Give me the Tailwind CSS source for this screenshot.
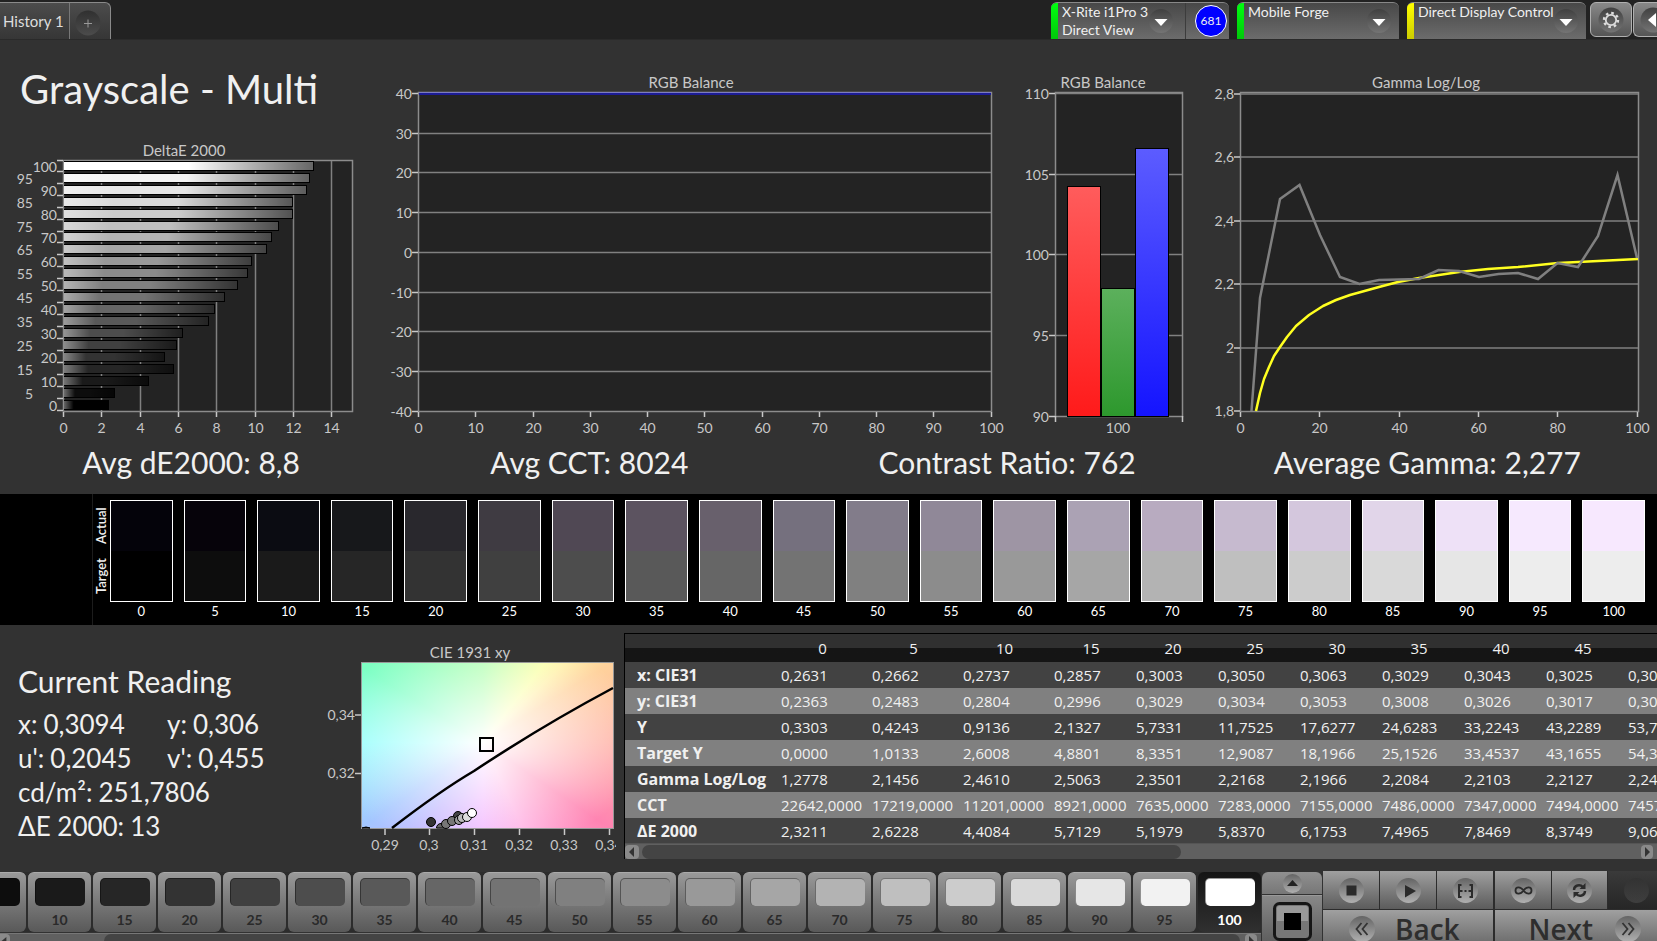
<!DOCTYPE html>
<html lang="en">
<head>
<meta charset="utf-8">
<title>Grayscale - Multi</title>
<script src="https://cdn.jsdelivr.net/npm/@tailwindcss/browser@4"></script>
</head>
<body class="h-screen overflow-hidden bg-[#323232] font-['Lato',sans-serif] text-[#f0f0f0]">
<svg class="absolute size-0" aria-hidden="true">
  <defs>
    <linearGradient id="knob" x1="0" y1="0" x2="0" y2="1"><stop offset="0" stop-color="#404040"/><stop offset="1" stop-color="#747474"/></linearGradient>
    <linearGradient id="knobDark" x1="0" y1="0" x2="0" y2="1"><stop offset="0" stop-color="#303030"/><stop offset="1" stop-color="#4c4c4c"/></linearGradient>
    <linearGradient id="knobLight" x1="0" y1="0" x2="0" y2="1"><stop offset="0" stop-color="#646464"/><stop offset="1" stop-color="#b0b0b0"/></linearGradient>
    <linearGradient id="sheen" x1="0" y1="0" x2="1" y2="0"><stop offset="0" stop-color="#fff" stop-opacity=".4"/><stop offset=".22" stop-color="#fff" stop-opacity="0"/><stop offset=".5" stop-color="#000" stop-opacity="0"/><stop offset="1" stop-color="#000" stop-opacity=".6"/></linearGradient>
    <linearGradient id="red" x1="0" y1="0" x2="0" y2="1"><stop offset="0" stop-color="#ff5c5c"/><stop offset="1" stop-color="#ff1a1a"/></linearGradient>
    <linearGradient id="green" x1="0" y1="0" x2="0" y2="1"><stop offset="0" stop-color="#5cb05c"/><stop offset="1" stop-color="#2d982d"/></linearGradient>
    <linearGradient id="blue" x1="0" y1="0" x2="0" y2="1"><stop offset="0" stop-color="#5c5cff"/><stop offset="1" stop-color="#1414ff"/></linearGradient>
  </defs>
</svg>

<header class="flex h-10 items-start justify-between border-b border-[#2a2a2a] bg-[#222222] pt-[2px]">
  <nav class="flex h-[37px] w-[111px] rounded-tr-md border-t border-r border-[#8a8a8a] bg-linear-to-b from-[#4c4c4c] to-[#363636]">
    <button class="w-[70px] border-r border-[#777777] pl-[3px] text-left text-[15px] whitespace-nowrap text-[#dddddd]">History 1</button>
    <button class="flex flex-1 items-center justify-center" aria-label="Add history">
      <svg class="mt-1 mr-1 size-[26px]" viewBox="0 0 26 26"><circle cx="13" cy="13" r="12.5" fill="url(#knobDark)"/><path d="M9 13.500h8M13 9.500v8" stroke="#999" fill="none"/></svg>
    </button>
  </nav>
  <div class="flex">
    <div class="mr-2 flex h-[37px] w-[178px] overflow-hidden rounded-t-md border-t border-[#888888] bg-linear-to-b from-[#484848] to-[#6c6c6c]">
      <span class="w-[7px] bg-linear-to-b from-[#00ff10] to-[#00c80a]"></span>
      <label class="relative w-[127px] pl-1 text-sm leading-[19px]">
        <select class="block h-[17px] w-[118px] appearance-none bg-transparent leading-[17px]" aria-label="Meter"><option>X-Rite i1Pro 3</option></select>
        Direct View
        <svg class="pointer-events-none absolute top-[6px] right-3 size-6" viewBox="0 0 24 24"><circle cx="12" cy="12" r="12" fill="url(#knob)"/><path d="M5.500 10h13l-6.500 7z" fill="#fff"/></svg>
      </label>
      <span class="flex flex-1 items-center justify-end border-l border-[#3c3c3c] pr-[2px]"><span class="flex size-8 items-center justify-center rounded-full border border-white bg-[#0000ff] text-xs">681</span></span>
    </div>
    <label class="relative mr-2 flex h-[37px] w-[162px] overflow-hidden rounded-t-md border-t border-[#888888] bg-linear-to-b from-[#484848] to-[#6c6c6c]">
      <span class="w-[7px] bg-linear-to-b from-[#00ff10] to-[#00c80a]"></span>
      <select class="h-[17px] flex-1 appearance-none bg-transparent pl-1 text-sm leading-[17px]" aria-label="Pattern source"><option>Mobile Forge</option></select>
      <svg class="pointer-events-none absolute top-[6px] right-2 size-6" viewBox="0 0 24 24"><circle cx="12" cy="12" r="12" fill="url(#knob)"/><path d="M5.500 10h13l-6.500 7z" fill="#fff"/></svg>
    </label>
    <label class="relative mr-1 flex h-[37px] w-[179px] overflow-hidden rounded-t-md border-t border-[#888888] bg-linear-to-b from-[#484848] to-[#6c6c6c]">
      <span class="w-[7px] bg-linear-to-b from-[#ffff00] to-[#cccc00]"></span>
      <select class="h-[17px] flex-1 appearance-none bg-transparent pl-1 text-sm leading-[17px]" aria-label="Display control"><option>Direct Display Control</option></select>
      <svg class="pointer-events-none absolute top-[6px] right-2 size-6" viewBox="0 0 24 24"><circle cx="12" cy="12" r="12" fill="url(#knob)"/><path d="M5.500 10h13l-6.500 7z" fill="#fff"/></svg>
    </label>
    <button class="flex h-[35px] w-[42px] items-center justify-center rounded-md border border-[#b0b0b0] bg-linear-to-b from-[#888888] to-[#555555]" aria-label="Settings">
      <svg class="size-[26px]" viewBox="0 0 26 26"><circle cx="13" cy="13" r="12.500" fill="url(#knob)"/><circle cx="13" cy="13" r="5.200" fill="none" stroke="#ddd" stroke-width="1.800"/><circle cx="13" cy="13" r="7" fill="none" stroke="#ddd" stroke-width="2.400" stroke-dasharray="2.600 2.898"/></svg>
    </button>
    <button class="ml-px flex h-[35px] w-6 items-center overflow-hidden rounded-l-md border border-r-0 border-[#b0b0b0] bg-linear-to-b from-[#888888] to-[#555555] pl-[6px]" aria-label="Collapse">
      <svg class="size-[26px] shrink-0" viewBox="0 0 26 26"><circle cx="13" cy="13" r="12.500" fill="url(#knob)"/><path d="M8 13l8-7v14z" fill="#fff"/></svg>
    </button>
  </div>
</header>

<main>
  <section class="grid grid-cols-[370fr_640fr_200fr_447fr]">
    <div>
      <h1 class="h-[100px] pt-[22px] pl-5 text-[40px] leading-[54px]">Grayscale - Multi</h1>
      <svg id="deltaE" class="block h-auto w-full" viewBox="0 140 370 300" font-size="14" fill="#c8c8c8"></svg>
    </div>
    <svg id="rgbLine" class="block h-auto w-full" viewBox="370 40 640 400" font-size="14" fill="#c8c8c8"></svg>
    <svg id="rgbBars" class="block h-auto w-full" viewBox="1010 40 200 400" font-size="14" fill="#c8c8c8"></svg>
    <svg id="gamma" class="block h-auto w-full" viewBox="1210 40 447 400" font-size="14" fill="#c8c8c8"></svg>
  </section>
  <section class="grid h-[54px] grid-cols-[382fr_414fr_421fr_419fr] pt-[2px] pr-5 text-center text-[30px] leading-[40px]">
    <p>Avg dE2000: 8,8</p><p>Avg CCT: 8024</p><p>Contrast Ratio: 762</p><p>Average Gamma: 2,277</p>
  </section>

  <section class="flex h-[131px] bg-black pt-[6px] pr-3 pl-[92px]">
    <div class="-mt-[6px] flex w-[18px] shrink-0 flex-col items-start border-l border-[#1c1c1c] pt-[6px] text-[13px] leading-4 font-semibold">
      <span class="flex h-[51px] rotate-180 items-center justify-center [writing-mode:vertical-rl]">Actual</span>
      <span class="flex h-[51px] rotate-180 items-center justify-center [writing-mode:vertical-rl]">Target</span>
    </div>
    <div id="swatches" class="grid flex-1 grid-cols-[repeat(21,minmax(0,1fr))] gap-[11px]"></div>
  </section>

  <section class="flex h-[246px]">
    <div class="w-[325px] shrink-0 pt-9 pl-[18px] text-[26px] leading-[34px]">
      <h2 class="mb-[6px] text-[30px] leading-[40px]">Current Reading</h2>
      <dl class="grid grid-cols-[149px_1fr]">
        <div class="flex gap-[6px]"><dt>x:</dt><dd>0,3094</dd></div><div class="flex gap-[6px]"><dt>y:</dt><dd>0,306</dd></div>
        <div class="flex gap-[6px]"><dt>u':</dt><dd>0,2045</dd></div><div class="flex gap-[6px]"><dt>v':</dt><dd>0,455</dd></div>
        <div class="col-span-2 flex gap-[6px]"><dt>cd/m²:</dt><dd>251,7806</dd></div>
        <div class="col-span-2 flex gap-[6px]"><dt>ΔE 2000:</dt><dd>13</dd></div>
      </dl>
    </div>
    <svg class="block h-[240px] w-[291px] shrink-0" viewBox="325 625 291 240" font-size="14" fill="#c8c8c8">
      <text x="470" y="658" text-anchor="middle" font-size="15">CIE 1931 xy</text>
      <foreignObject x="362" y="663" width="252" height="166"><div class="h-full w-full bg-[radial-gradient(ellipse_farthest-corner_at_48%_48%,#ffffff_0%,#ffffff00_88%),conic-gradient(from_0deg_at_48%_48%,#b0ffb0_0deg,#faffa8_38deg,#fff0a8_46deg,#ffd29c_58deg,#ffb0a4_90deg,#ff84b2_124deg,#ffb0e4_155deg,#f2b8ff_180deg,#c4b8ff_214deg,#a4c6ff_235deg,#8cfffc_270deg,#7cffc4_302deg,#98ffb4_335deg,#b0ffb0_360deg)]"></div></foreignObject>
      <rect x="361.500" y="662.500" width="252" height="166" fill="none" stroke="#999"/>
      <path d="M355 715h6M355 773.500h6M385 829v6M429.500 829v6M474.500 829v6M519.500 829v6M564.500 829v6M609.500 829v6" stroke="#c8c8c8" stroke-width="1.500"/>
      <path d="M392 828Q440 791 474 771Q540 727 613 688" fill="none" stroke="#000" stroke-width="2.500"/>
      <rect x="480" y="738" width="13" height="13" fill="none" stroke="#000" stroke-width="2"/>
      <g stroke="#000" stroke-width="1">
        <circle cx="431" cy="822" r="4.500" fill="#333"/><path d="M362 828q4-2 8 0z" fill="#222"/>
        <path d="M436.500 828a4.500 4.500 0 0 1 9 0z" fill="#666"/><circle cx="446" cy="824" r="4.500" fill="#777"/>
        <circle cx="458" cy="816" r="4.500" fill="#444"/><circle cx="452" cy="821" r="4.500" fill="#777"/>
        <circle cx="459" cy="820" r="4.500" fill="#999"/><circle cx="462" cy="818" r="4.500" fill="#bbb"/><circle cx="467" cy="817" r="4.500" fill="#ddd"/><circle cx="472" cy="813" r="4.500" fill="#fff"/>
      </g>
      <g text-anchor="end"><text x="355" y="720">0,34</text><text x="355" y="778">0,32</text></g>
      <g text-anchor="middle"><text x="385" y="850">0,29</text><text x="429" y="850">0,3</text><text x="474" y="850">0,31</text><text x="519" y="850">0,32</text><text x="564" y="850">0,33</text><text x="609" y="850">0,34</text></g>
    </svg>
    <div class="mt-2 ml-2 flex h-[226px] min-w-0 flex-1 flex-col border-t border-l border-black">
      <div class="overflow-hidden">
        <table class="w-[1200px] table-fixed border-collapse text-left font-['Open_Sans',sans-serif] text-[15px] whitespace-nowrap">
          <colgroup><col class="w-[152px]"><col class="w-[91px]"><col class="w-[91px]"><col class="w-[91px]"><col class="w-[82px]"><col class="w-[82px]"><col class="w-[82px]"><col class="w-[82px]"><col class="w-[82px]"><col class="w-[82px]"><col class="w-[82px]"><col></colgroup>
          <thead><tr id="thead" class="h-7 bg-linear-to-b from-[#303030] from-50% to-[#151515] to-50%"></tr></thead>
          <tbody id="tbody"></tbody>
        </table>
      </div>
      <div class="flex h-4 items-center justify-between border-t border-[#555555] bg-[#606060] pr-1">
        <div class="flex items-center gap-[3px]">
          <button class="flex h-[14px] w-[14px] items-center justify-center rounded-sm bg-[#8a8a8a]" aria-label="Scroll left"><svg class="size-[10px]" viewBox="0 0 10 10"><path d="M2 5l5-5v10z" fill="#333"/></svg></button>
          <div class="h-[14px] w-[539px] rounded-full bg-[#444444]"></div>
        </div>
        <button class="flex h-[14px] w-[12px] items-center justify-center rounded-sm bg-[#8a8a8a]" aria-label="Scroll right"><svg class="size-[10px]" viewBox="0 0 10 10"><path d="M8 5L3 0v10z" fill="#333"/></svg></button>
      </div>
    </div>
  </section>
</main>

<footer class="flex h-[70px] overflow-hidden">
  <div class="flex w-[1261px] shrink-0 flex-col overflow-hidden pt-px">
    <div id="levels" class="flex h-[60px] justify-end gap-[2px] bg-[#2c2c2c]"></div>
    <div class="mt-px flex h-[15px] items-start justify-between border-t border-[#777777] bg-[#606060] pr-1">
      <button class="flex h-[14px] w-[10px] items-center rounded-r-sm bg-[#8a8a8a]" aria-label="Scroll levels left"><svg class="size-[8px]" viewBox="0 0 10 10"><path d="M2 5l6-5v10z" fill="#333"/></svg></button>
      <div class="mr-[5px] ml-[94px] h-[14px] flex-1 rounded-full bg-[#444444]"></div>
      <button class="flex h-[14px] w-[12px] items-center justify-center rounded-sm bg-[#8a8a8a]" aria-label="Scroll levels right"><svg class="size-[10px]" viewBox="0 0 10 10"><path d="M8 5L3 0v10z" fill="#333"/></svg></button>
    </div>
  </div>
  <div class="ml-px flex w-[60px] shrink-0 flex-col pt-px">
    <button class="flex h-[22px] shrink-0 items-center justify-center rounded-t-md bg-linear-to-b from-[#909090] to-[#777777]" aria-label="Expand">
      <svg class="size-[19px]" viewBox="0 0 19 19"><circle cx="9.500" cy="9.500" r="9.500" fill="url(#knobLight)"/><path d="M4 12l5.500-6 5.500 6z" fill="#222"/></svg>
    </button>
    <button class="mt-px flex h-[50px] shrink-0 justify-center border-t border-[#999999] bg-linear-to-b from-[#888888] to-[#5c5c5c] pt-[6px]" aria-label="Window pattern">
      <svg class="size-[39px]" viewBox="0 0 39 39"><rect x="1.500" y="1.500" width="36" height="36" rx="5" fill="#777" stroke="#161616" stroke-width="3"/><path d="M4 19V6a2 2 0 0 1 2-2h27a2 2 0 0 1 2 2v13z" fill="#999"/><path d="M11 11h17v17H11z" fill="#000"/></svg>
    </button>
  </div>
  <div class="ml-px grid min-w-0 flex-1 grid-cols-[171fr_162fr] gap-x-[2px] gap-y-px bg-[#2c2c2c]">
    <div class="grid h-[38px] grid-cols-3 gap-px">
      <button class="flex items-center justify-center bg-linear-to-b from-[#a0a0a0] to-[#5c5c5c]" aria-label="Stop"><svg class="size-[25px]" viewBox="0 0 25 25"><circle cx="12.500" cy="12.500" r="12.500" fill="url(#knobLight)"/><path d="M7.500 7.500h10v10h-10z" fill="#2b2b2b"/></svg></button>
      <button class="flex items-center justify-center bg-linear-to-b from-[#a0a0a0] to-[#5c5c5c]" aria-label="Play"><svg class="size-[25px]" viewBox="0 0 25 25"><circle cx="12.500" cy="12.500" r="12.500" fill="url(#knobLight)"/><path d="M9 7l11 6-11 6.500z" fill="#2b2b2b"/></svg></button>
      <button class="flex items-center justify-center bg-linear-to-b from-[#a0a0a0] to-[#5c5c5c]" aria-label="Read range"><svg class="size-[25px]" viewBox="0 0 25 25"><circle cx="12.500" cy="12.500" r="12.500" fill="url(#knobLight)"/><path d="M8.500 7H6v12h2.500M16.500 7H19v12h-2.500" fill="none" stroke="#2b2b2b" stroke-width="2"/><path d="M7 13h2.500M11.500 13h2M15.500 13H18" stroke="#2b2b2b" stroke-width="1.800"/></svg></button>
    </div>
    <div class="grid h-[38px] grid-cols-[56fr_56fr_50fr] gap-px">
      <button class="flex items-center justify-center bg-linear-to-b from-[#a0a0a0] to-[#5c5c5c]" aria-label="Read continuously"><svg class="size-[25px]" viewBox="0 0 25 25"><circle cx="12.500" cy="12.500" r="12.500" fill="url(#knobLight)"/><path d="M12.500 12.500C9.500 8 4.500 8.500 4.500 12.500S9.500 17 12.500 12.500S20.500 8.500 20.500 12.500S15.500 17 12.500 12.500z" fill="none" stroke="#2b2b2b" stroke-width="1.800"/></svg></button>
      <button class="flex items-center justify-center bg-linear-to-b from-[#a0a0a0] to-[#5c5c5c]" aria-label="Refresh"><svg class="size-[25px]" viewBox="0 0 25 25"><circle cx="12.500" cy="12.500" r="12.500" fill="url(#knobLight)"/><path d="M7 12c0-5 6-6 9-3M18 13c0 5-6 6-9 3" fill="none" stroke="#2b2b2b" stroke-width="2.400"/><path d="M18.500 5v6h-6zM6.500 20v-6h6z" fill="#2b2b2b"/></svg></button>
      <button class="flex items-center justify-center bg-linear-to-b from-[#3a3a3a] to-[#262626]" aria-label="Record" disabled><svg class="ml-2 size-[25px]" viewBox="0 0 25 25"><circle cx="12.500" cy="12.500" r="12.500" fill="url(#knobDark)" opacity=".6"/></svg></button>
    </div>
    <button class="flex h-[38px] items-center gap-5 bg-linear-to-b from-[#a0a0a0] to-[#666666] pl-[26px] font-['Open_Sans',sans-serif] text-[28px] leading-[38px] font-semibold text-[#2e2e2e]">
      <svg class="size-[26px]" viewBox="0 0 26 26"><circle cx="13" cy="13" r="13" fill="url(#knobLight)"/><path d="M12.500 7l-5 6 5 6M18.500 7l-5 6 5 6" fill="none" stroke="#333" stroke-width="1.800"/></svg>Back
    </button>
    <button class="flex h-[38px] items-center justify-between bg-linear-to-b from-[#a0a0a0] to-[#666666] pr-4 pl-[33px] font-['Open_Sans',sans-serif] text-[28px] leading-[38px] font-semibold text-[#2e2e2e]">
      Next<svg class="size-[26px]" viewBox="0 0 26 26"><circle cx="13" cy="13" r="13" fill="url(#knobLight)"/><path d="M7.500 7l5 6-5 6M13.500 7l5 6-5 6" fill="none" stroke="#333" stroke-width="1.800"/></svg>
    </button>
  </div>
</footer>

<script>
const el = id => document.getElementById(id);
const text = (x, y, s, anchor = 'middle') => `<text x="${x}" y="${y}" text-anchor="${anchor}">${s}</text>`;
const title = (x, y, s) => `<text x="${x}" y="${y}" text-anchor="middle" font-size="15">${s}</text>`;
const line = (x1, y1, x2, y2, color = '#808080', w = 1.5) => `<path d="M${x1} ${y1}L${x2} ${y2}" stroke="${color}" stroke-width="${w}" fill="none"/>`;
const frame = (x1, y1, x2, y2) => `<rect x="${x1 + .5}" y="${y1 + .5}" width="${x2 - x1}" height="${y2 - y1}" fill="#232323" stroke="#8c8c8c" stroke-width="1.5"/>`;
const TICK = '#c8c8c8';

// Delta E per stimulus level, 0 to 100 in steps of 5
const deltaE = [2.32, 2.62, 4.41, 5.71, 5.2, 5.84, 6.18, 7.5, 7.85, 8.37, 9.06, 9.55, 9.75, 10.55, 10.8, 11.15, 11.9, 11.9, 12.65, 12.8, 13];
const target = ['#000', '#0d0d0d', '#1a1a1a', '#262626', '#333', '#404040', '#4d4d4d', '#595959', '#666', '#737373', '#808080', '#8c8c8c', '#999', '#a6a6a6', '#b3b3b3', '#bfbfbf', '#ccc', '#d9d9d9', '#e6e6e6', '#ededed', '#ededed'];
const actual = ['#04030a', '#06030a', '#0b0c12', '#17181b', '#29282d', '#3f3b42', '#504854', '#5c5360', '#68606c', '#75707e', '#827c8a', '#908898', '#9e95a4', '#aba2b4', '#b8abc0', '#c6bacf', '#d4c7dd', '#e1d5e9', '#eee1f7', '#f6e9fe', '#f7e8fe'];

let s = title(184, 156, 'DeltaE 2000') + frame(63, 160, 352, 411);
for (let v = 0; v <= 14; v += 2) {
  const x = Math.round(63 + v * 19.15) + .5;
  if (v) s += line(x, 161, x, 411);
  s += line(x, 412, x, 417, TICK) + text(x, 433, v);
}
deltaE.forEach((d, i) => {
  const y = Math.round(400.5 - i * 11.93), w = Math.round(d * 19.15);
  const fill = i === 20 ? '#fff' : i === 19 ? '#f4f4f4' : target[i];
  s += `<rect x="64" y="${y - 1}" width="${w + 1}" height="10" fill="#000"/><rect x="64" y="${y}" width="${w}" height="8" fill="${fill}"/><rect x="64" y="${y}" width="${w}" height="8" fill="url(#sheen)"/>`;
  s += text(i % 2 ? 33 : 57, y + 10, i * 5, 'end') + line(57, y + 9.5, 63, y + 9.5, TICK);
});
s += line(57, 160.5, 63, 160.5, TICK);
el('deltaE').innerHTML = s;

s = title(691, 88, 'RGB Balance') + frame(418, 92, 991, 411);
for (let i = 0; i <= 8; i++) {
  const y = Math.round(93 + i * 39.7) + .5;
  if (i && i < 8) s += line(419, y, 991, y);
  s += line(412, y, 418, y, TICK) + text(412, y + 5, 40 - i * 10, 'end');
}
for (let i = 0; i <= 10; i++) {
  const x = Math.round(418 + i * 57.25) + .5;
  s += line(x, 412, x, 417, TICK) + text(x, 433, i * 10);
}
s += line(419, 92.5, 991, 92.5, '#7c7cc0', 1) + line(419, 94, 991, 94, '#1c1c94', 2);
el('rgbLine').innerHTML = s;

s = title(1103, 88, 'RGB Balance') + frame(1055, 92, 1182, 416);
[110, 105, 100, 95, 90].forEach((v, i) => {
  const y = Math.round(93 + i * 80.7) + .5;
  if (i < 4) s += line(1056, y, 1182, y);
  s += line(1049, y, 1055, y, TICK) + text(1049, y + 5, v, 'end');
});
[[1067, 186, 'red'], [1101, 288, 'green'], [1135, 148, 'blue']].forEach(([x, y, c]) => {
  s += `<rect x="${x + .5}" y="${y + .5}" width="33" height="${416 - y}" fill="url(#${c})" stroke="#000"/>`;
});
s += line(1055.5, 416, 1055.5, 422, TICK) + line(1182.5, 416, 1182.5, 422, TICK) + text(1118, 433, 100);
el('rgbBars').innerHTML = s;

s = title(1426, 88, 'Gamma Log/Log') + frame(1240, 92, 1638, 411);
['2,8', '2,6', '2,4', '2,2', '2', '1,8'].forEach((v, i) => {
  const y = Math.round(93.5 + i * 63.5);
  if (i < 5) s += line(1241, y, 1638, y);
  s += line(1234, y, 1240, y, TICK) + text(1234, y + 5, v, 'end');
});
for (let i = 0; i <= 5; i++) {
  const x = Math.round(1240 + i * 79.3) + .5;
  s += line(x, 412, x, 417, TICK) + text(x, 433, i * 20);
}
s += '<path d="M1256 411L1260 393L1264 379L1269 367L1274 356L1280 347L1287 337L1296 326L1309 315L1323 306L1336 300L1350 295L1379 287L1398 282L1419 278L1459 272L1488 269L1518 267L1558 263L1598 261L1638 259" fill="none" stroke="#ffff20" stroke-width="2.5" stroke-linejoin="round"/>';
s += '<path d="M1251.5 411L1260 298L1280 199L1299.5 185L1320 235L1340 277L1359.5 284L1379 280L1419 279L1438.5 270L1459 271L1479 277L1498.5 274L1518 273L1538 279L1557.5 263L1578 267L1598 236L1617.5 175L1637 258" fill="none" stroke="#808080" stroke-width="2.5"/>';
el('gamma').innerHTML = s;

el('swatches').innerHTML = actual.map((a, i) =>
  `<div class="text-center text-[13px] leading-[19px] text-white"><div class="flex h-[102px] flex-col border border-white"><div class="flex-1" style="background:${a}"></div><div class="flex-1" style="background:${target[i]}"></div></div>${i * 5}</div>`).join('');

// Measured values per level; the last column runs past the visible area
const rows = {
  'x: CIE31': '0,2631 0,2662 0,2737 0,2857 0,3003 0,3050 0,3063 0,3029 0,3043 0,3025 0,3024',
  'y: CIE31': '0,2363 0,2483 0,2804 0,2996 0,3029 0,3034 0,3053 0,3008 0,3026 0,3017 0,3019',
  'Y': '0,3303 0,4243 0,9136 2,1327 5,7331 11,7525 17,6277 24,6283 33,2243 43,2289 53,7120',
  'Target Y': '0,0000 1,0133 2,6008 4,8801 8,3351 12,9087 18,1966 25,1526 33,4537 43,1655 54,3210',
  'Gamma Log/Log': '1,2778 2,1456 2,4610 2,5063 2,3501 2,2168 2,1966 2,2084 2,2103 2,2127 2,2431',
  'CCT': '22642,0000 17219,0000 11201,0000 8921,0000 7635,0000 7283,0000 7155,0000 7486,0000 7347,0000 7494,0000 7457,0000',
  'ΔE 2000': '2,3211 2,6228 4,4084 5,7129 5,1979 5,8370 6,1753 7,4965 7,8469 8,3749 9,0612'
};
el('thead').innerHTML = '<td></td>' + Array.from({length: 11}, (_, i) => `<th scope="col" class="p-0 text-center font-normal">${i * 5}</th>`).join('');
el('tbody').innerHTML = Object.entries(rows).map(([name, v], i) =>
  `<tr class="${i % 2 ? 'h-[26px] bg-[#808080] leading-[24px]' : 'h-[26px] bg-[#424242] leading-[24px]'}"><th scope="row" class="py-0 pr-0 pl-3 text-base leading-[24px] font-bold">${name}</th>${v.split(' ').map(c => `<td class="py-0 pr-0 pl-1">${c}</td>`).join('')}</tr>`).join('');

el('levels').innerHTML = Array.from({length: 20}, (_, k) => {
  const i = k + 1, on = i === 20;
  const c = on ? '#fff' : i === 19 ? '#f2f2f2' : target[i];
  return `<button class="${on ? 'flex h-[60px] w-[63px] shrink-0 flex-col items-center rounded-md bg-linear-to-b from-[#151515] to-[#303030] pt-[6px] text-sm leading-[24px] font-bold text-white' : 'flex h-[60px] w-[63px] shrink-0 flex-col items-center rounded-md border-t border-[#aaaaaa] bg-linear-to-b from-[#999999] to-[#595959] pt-[5px] text-sm leading-[24px] font-bold text-[#2a2a2a]'}"><span class="mb-[2px] h-[30px] w-[50px] rounded-[5px] border-t border-l border-black/40" style="background:${c}"></span>${i * 5}</button>`;
}).join('');
</script>
</body>
</html>
